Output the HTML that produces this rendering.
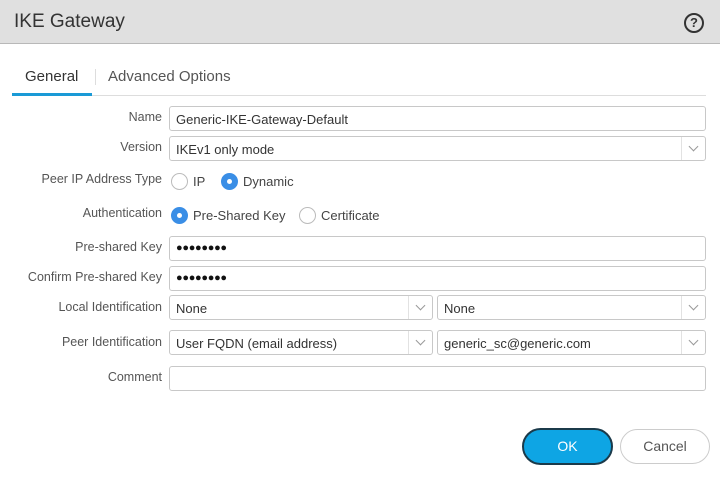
<!DOCTYPE html>
<html><head><style>
*{box-sizing:border-box;margin:0;padding:0}
body{width:720px;height:484px;background:#fff;font-family:"Liberation Sans",sans-serif;color:#333;position:relative;overflow:hidden}
.a{position:absolute}
.hdr{left:0;top:0;width:720px;height:44px;background:#e0e0e0;border-bottom:1px solid #b8b8b8}
.lbl{position:absolute;right:558px;font-size:12.5px;color:#555;white-space:nowrap}
.in{position:absolute;border:1px solid #c8c8c8;border-radius:3px;height:25px;font-size:13px;color:#333;padding:5px 6px;white-space:nowrap;background:#fff}
.chev{position:absolute;right:0;top:0;width:24px;height:23px;border-left:1px solid #e2e2e2}
.chev:after{content:"";position:absolute;left:8px;top:6px;width:6px;height:6px;border-right:1px solid #999;border-bottom:1px solid #999;transform:rotate(45deg)}
.r{position:absolute;width:17px;height:17px;border-radius:50%;border:1px solid #bbb;background:#fff}
.r.on{background:#3a8ee6;border-color:#3a8ee6}
.r.on:after{content:"";position:absolute;left:5px;top:5px;width:5px;height:5px;border-radius:50%;background:#fff}
.rt{position:absolute;font-size:13px;color:#444}
.dots{font-size:11px;letter-spacing:-0.3px;color:#111;padding-top:5px}
</style></head><body>
<div class="a hdr"></div>
<div class="a" style="left:14px;top:11px;font-size:19px;color:#333">IKE Gateway</div>
<div class="a" style="left:684px;top:13px;width:20px;height:20px;border:2px solid #333;border-radius:50%;font-size:13px;font-weight:bold;text-align:center;line-height:16px;color:#333">?</div>

<div class="a" style="left:25px;top:68px;font-size:15px;color:#333">General</div>
<div class="a" style="left:95px;top:69px;width:1px;height:16px;background:#ddd"></div>
<div class="a" style="left:108px;top:68px;font-size:15px;color:#555">Advanced Options</div>
<div class="a" style="left:12px;top:95px;width:694px;height:1px;background:#ddd"></div>
<div class="a" style="left:12px;top:93px;width:80px;height:3px;background:#1a9ad6"></div>

<div class="lbl" style="top:110px">Name</div>
<div class="in" style="left:169px;top:106px;width:537px">Generic-IKE-Gateway-Default</div>
<div class="lbl" style="top:140px">Version</div>
<div class="in" style="left:169px;top:136px;width:537px">IKEv1 only mode<div class="chev"></div></div>

<div class="lbl" style="top:172px">Peer IP Address Type</div>
<div class="r" style="left:171px;top:173px"></div><div class="rt" style="left:193px;top:174px">IP</div>
<div class="r on" style="left:221px;top:173px"></div><div class="rt" style="left:243px;top:174px">Dynamic</div>

<div class="lbl" style="top:206px">Authentication</div>
<div class="r on" style="left:171px;top:207px"></div><div class="rt" style="left:193px;top:208px">Pre-Shared Key</div>
<div class="r" style="left:299px;top:207px"></div><div class="rt" style="left:321px;top:208px">Certificate</div>

<div class="lbl" style="top:240px">Pre-shared Key</div>
<div class="in dots" style="left:169px;top:236px;width:537px">●●●●●●●●</div>
<div class="lbl" style="top:270px">Confirm Pre-shared Key</div>
<div class="in dots" style="left:169px;top:266px;width:537px">●●●●●●●●</div>

<div class="lbl" style="top:300px">Local Identification</div>
<div class="in" style="left:169px;top:295px;width:264px">None<div class="chev"></div></div>
<div class="in" style="left:437px;top:295px;width:269px">None<div class="chev"></div></div>

<div class="lbl" style="top:335px">Peer Identification</div>
<div class="in" style="left:169px;top:330px;width:264px">User FQDN (email address)<div class="chev"></div></div>
<div class="in" style="left:437px;top:330px;width:269px">generic_sc@generic.com<div class="chev"></div></div>

<div class="lbl" style="top:370px">Comment</div>
<div class="in" style="left:169px;top:366px;width:537px"></div>

<div class="a" style="left:522px;top:428px;width:91px;height:37px;border-radius:19px;background:#0ea5e4;border:2px solid #1b3a4a;color:#fff;font-size:14px;text-align:center;line-height:33px">OK</div>
<div class="a" style="left:620px;top:429px;width:90px;height:35px;border-radius:18px;background:#fff;border:1px solid #ccc;color:#555;font-size:14px;text-align:center;line-height:33px">Cancel</div>
</body></html>
